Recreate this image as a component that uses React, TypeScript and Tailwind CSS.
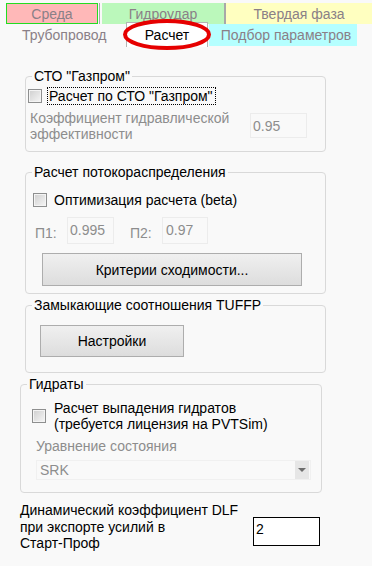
const font = { fontFamily: '"Liberation Sans", Arial, sans-serif' };

function CheckBox() {
  return (
    <div className="h-[14px] w-[14px] shrink-0 border border-[#8e8f8f] bg-[#f4f4f4] p-px">
      <div className="h-full w-full bg-gradient-to-br from-[#d2d2d2] to-[#f3f3f3]" />
    </div>
  );
}

function Group({
  title,
  className,
  children,
}: {
  title: string;
  className: string;
  children: React.ReactNode;
}) {
  return (
    <fieldset className={`rounded-[4px] border border-[#d9d9d9] px-0 ${className}`}>
      <legend className="ml-[6px] px-[2px] leading-[16px] text-black">{title}</legend>
      {children}
    </fieldset>
  );
}

export default function App() {
  return (
    <div
      className="relative h-[566px] w-[372px] overflow-hidden bg-[#f9f9f9] text-[14px] leading-[16px]"
      style={font}
    >
      {/* top tab rows */}
      <div className="mt-[3px] flex h-[21px] pl-[6px] text-[#8a8087]">
        <div className="flex w-[92px] items-center justify-center border border-[#22dd22] bg-[#ffb8b8]">
          Среда
        </div>
        <div className="ml-px w-px bg-[#a8a8a8]" />
        <div className="ml-[2px] flex w-[122px] items-center justify-center bg-[#bbf8bb]">
          Гидроудар
        </div>
        <div className="w-[2px] bg-[#a8a8a8]" />
        <div className="flex w-[146px] items-center justify-center bg-[#ffffc0]">
          Твердая фаза
        </div>
      </div>
      <div className="flex h-[22px] text-[#8a8087]">
        <div className="flex w-[126px] items-center pl-[22px]">Трубопровод</div>
        <div className="relative z-10 -mt-[2px] flex h-[25px] w-[82px] items-center justify-center border border-b-0 border-[#b4b4b4] bg-white text-black">
          Расчет
        </div>
        <div className="ml-px flex w-[148px] items-center justify-center pl-[6px] bg-[#b5ffff]">
          Подбор параметров
        </div>
      </div>

      <svg
        className="pointer-events-none absolute left-0 top-0 z-20"
        width="372"
        height="60"
        viewBox="0 0 372 60"
      >
        <ellipse cx="167" cy="34.5" rx="42" ry="13.5" fill="none" stroke="#e60000" strokeWidth="4" />
      </svg>

      {/* СТО Газпром */}
      <Group title={'СТО "Газпром"'} className="ml-[25px] mt-[22px] w-[301px] pb-[9px]">
        <div className="mt-[3px] flex h-[18px] items-center pl-[2px]">
          <CheckBox />
          <span className="ml-[5px] flex h-[18px] items-center border border-dotted border-black pl-px pr-[2px] text-black">
            Расчет по СТО "Газпром"
          </span>
        </div>
        <div className="mt-[5px] flex items-start pl-[4px]">
          <div className="w-[210px] text-[#8d8d8d]">
            Коэффициент гидравлической
            <br />
            эффективности
          </div>
          <div className="ml-[10px] mt-[3px] flex h-[25px] w-[57px] items-center border border-[#ececec] pl-[2px] text-[#8d8d8d]">
            0.95
          </div>
        </div>
      </Group>

      {/* Расчет потокораспределения */}
      <Group title="Расчет потокораспределения" className="ml-[25px] mt-[12px] w-[301px] pb-[7px]">
        <div className="mt-[12px] flex h-[16px] items-center pl-[7px]">
          <CheckBox />
          <span className="ml-[7px] text-black">Оптимизация расчета (beta)</span>
        </div>
        <div className="mt-[9px] flex h-[27px] items-center pl-[9px] text-[#8d8d8d]">
          <span className="mt-[4px] w-[32px]">П1:</span>
          <div className="h-[27px] w-[47px] border border-[#ececec] pl-[2px] pt-[4px]">0.995</div>
          <span className="ml-[16px] mt-[4px] w-[32px]">П2:</span>
          <div className="h-[27px] w-[46px] border border-[#ececec] pl-[3px] pt-[4px]">0.97</div>
        </div>
        <button
          type="button"
          className="ml-[16px] mt-[9px] flex h-[33px] w-[260px] items-center justify-center border border-[#adadad] bg-gradient-to-b from-[#f0f0f0] to-[#dddddd] text-black"
        >
          Критерии сходимости...
        </button>
      </Group>

      {/* TUFFP */}
      <Group title="Замыкающие соотношения TUFFP" className="ml-[25px] mt-[3px] w-[301px] pb-[15px]">
        <button
          type="button"
          className="ml-[14px] mt-[12px] flex h-[32px] w-[144px] items-center justify-center border border-[#adadad] bg-gradient-to-b from-[#f0f0f0] to-[#dddddd] text-black"
        >
          Настройки
        </button>
      </Group>

      {/* Гидраты */}
      <Group title="Гидраты" className="ml-[20px] mt-[3px] w-[302px] pb-[12px]">
        <div className="mt-[8px] flex items-center pl-[11px]">
          <CheckBox />
          <span className="ml-[8px] text-black">
            Расчет выпадения гидратов
            <br />
            (требуется лицензия на PVTSim)
          </span>
        </div>
        <div className="mt-[6px] pl-[15px] text-[#8d8d8d]">Уравнение состояния</div>
        <div className="ml-[15px] mt-[6px] flex h-[20px] w-[275px] items-center border border-[#f0f0f0] text-[#8d8d8d]">
          <span className="pl-[3px]">SRK</span>
          <div className="ml-auto mr-px flex h-[18px] w-[14px] items-center justify-center bg-[#e6e6e6]">
            <svg width="8" height="4" viewBox="0 0 8 4">
              <path d="M0 0h8L4 4z" fill="#6d6d6d" />
            </svg>
          </div>
        </div>
      </Group>

      {/* DLF */}
      <div className="ml-[20px] mt-[9px] flex items-start text-black">
        <div className="w-[233px] leading-[16.5px]">
          Динамический коэффициент DLF
          <br />
          при экспорте усилий в
          <br />
          Старт-Проф
        </div>
        <div className="mt-[15px] h-[29px] w-[67px] border border-black bg-white pl-[2px] pt-[3px]">2</div>
      </div>
    </div>
  );
}
